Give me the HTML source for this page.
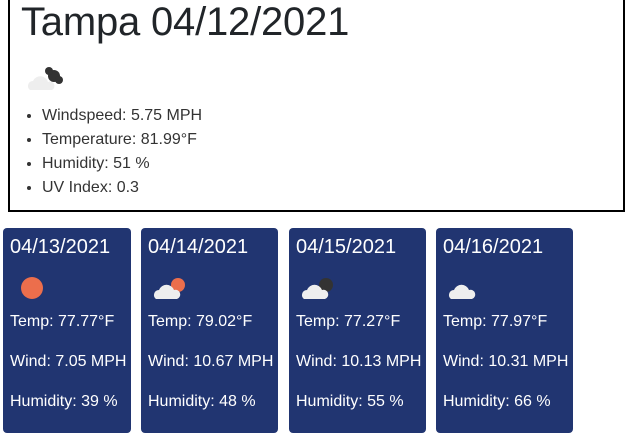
<!DOCTYPE html>
<html><head><style>
body{margin:0;width:630px;height:435px;background:#fff;font-family:"Liberation Sans",sans-serif;position:relative;overflow:hidden}
.box{position:absolute;left:8px;top:-10px;width:613px;height:218px;border:2px solid #000}
h1{position:absolute;left:21px;top:0;margin:0;font-weight:400;font-size:40px;line-height:44px;color:#212529;letter-spacing:-0.2px}
ul{position:absolute;left:0;top:104px;margin:0;padding-left:42px;color:#333;font-size:16px;line-height:24px}
.card{position:absolute;top:228px;width:128px;height:205px;background:#213571;border-radius:4px;color:#fff;padding-left:7px;box-sizing:border-box}
.card .d{position:absolute;left:7px;top:7px;font-size:20px;line-height:24px}
.card p{position:absolute;left:7px;margin:0;font-size:16px;line-height:18px;white-space:nowrap}
svg{position:absolute}
</style></head><body>
<div class="box"></div>
<h1>Tampa 04/12/2021</h1>
<svg style="left:26px;top:66px" width="40" height="26" viewBox="0 0 40 26">
<circle cx="28" cy="10" r="6" fill="#333"/><circle cx="23" cy="5" r="4" fill="#333"/><circle cx="33" cy="14" r="4" fill="#333"/>
<path d="M4 24a5 5 0 0 1 3-9a8 8 0 0 1 15 1a4 4 0 0 1 4 8z" fill="#eee"/>
</svg>
<ul><li>Windspeed: 5.75 MPH</li><li>Temperature: 81.99°F</li><li>Humidity: 51 %</li><li>UV Index: 0.3</li></ul>

<div class="card" style="left:3px"><div class="d">04/13/2021</div>
<svg style="left:16px;top:47px" width="26" height="26"><circle cx="13" cy="13" r="11" fill="#ec6e4c"/></svg>
<p style="top:85px">Temp: 77.77°F</p><p style="top:125px">Wind: 7.05 MPH</p><p style="top:165px">Humidity: 39 %</p></div>

<div class="card" style="left:141px;width:137px"><div class="d">04/14/2021</div>
<svg style="left:12px;top:47px" width="34" height="26"><circle cx="25" cy="10" r="7" fill="#ec6e4c"/><path d="M3 24a5 5 0 0 1 3-9a8 8 0 0 1 15 0a4.5 4.5 0 0 1 3 9z" fill="#eee"/></svg>
<p style="top:85px">Temp: 79.02°F</p><p style="top:125px">Wind: 10.67 MPH</p><p style="top:165px">Humidity: 48 %</p></div>

<div class="card" style="left:289px;width:137px"><div class="d">04/15/2021</div>
<svg style="left:12px;top:47px" width="34" height="26"><circle cx="25" cy="10" r="7" fill="#333"/><path d="M3 24a5 5 0 0 1 3-9a8 8 0 0 1 15 0a4.5 4.5 0 0 1 3 9z" fill="#eee"/></svg>
<p style="top:85px">Temp: 77.27°F</p><p style="top:125px">Wind: 10.13 MPH</p><p style="top:165px">Humidity: 55 %</p></div>

<div class="card" style="left:436px;width:137px"><div class="d">04/16/2021</div>
<svg style="left:12px;top:47px" width="34" height="26"><path d="M3 24a5 5 0 0 1 3-9a8 8 0 0 1 15 0a4.5 4.5 0 0 1 3 9z" fill="#eee"/></svg>
<p style="top:85px">Temp: 77.97°F</p><p style="top:125px">Wind: 10.31 MPH</p><p style="top:165px">Humidity: 66 %</p></div>
</body></html>
